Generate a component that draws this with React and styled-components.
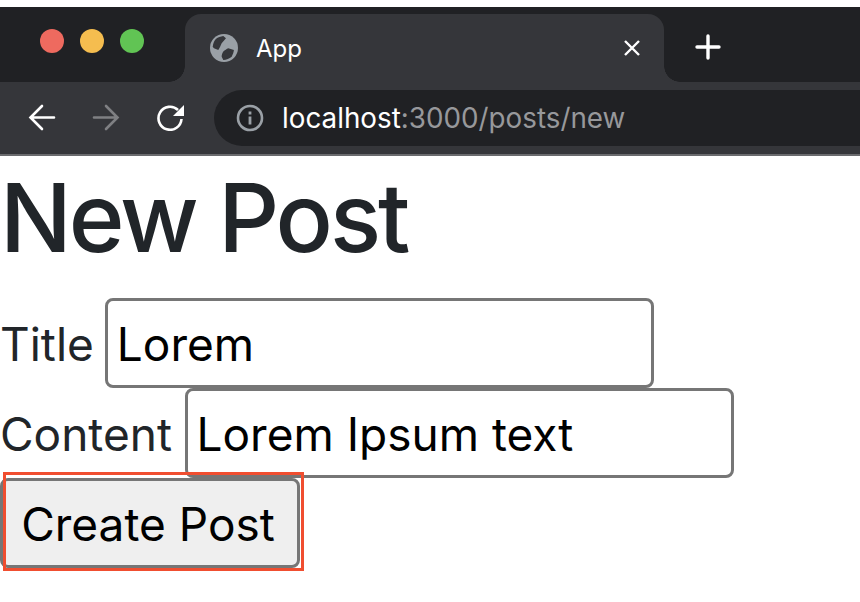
import React from "react";
import styled, { createGlobalStyle } from "styled-components";

const Global = createGlobalStyle`
  html, body { margin: 0; padding: 0; background: #fff; }
  body { font-family: Inter, "Liberation Sans", sans-serif; color: #212529; overflow: hidden; }
`;

const Page = styled.div`
  width: 860px;
  height: 602px;
  padding-top: 7px;
  box-sizing: border-box;
  overflow: hidden;
`;

const TabStrip = styled.div`
  height: 75px;
  background: #202124;
  display: flex;
  align-items: flex-end;
`;

const Lights = styled.div`
  width: 185px;
  height: 100%;
  box-sizing: border-box;
  padding: 22px 0 0 40px;
  display: flex;
  gap: 16px;
`;

const Light = styled.span`
  width: 24px;
  height: 24px;
  border-radius: 50%;
  background: ${props => props.color};
`;

const Tab = styled.div`
  position: relative;
  width: 479px;
  height: 68px;
  box-sizing: border-box;
  padding: 0 23px 0 25px;
  background: #35363a;
  border-radius: 16px 16px 0 0;
  display: flex;
  align-items: center;
  color: #fff;
  font-size: 24px;

  &::before, &::after {
    content: "";
    position: absolute;
    bottom: 0;
    width: 16px;
    height: 16px;
  }
  &::before {
    left: -16px;
    background: radial-gradient(circle at 0 0, transparent 15.5px, #35363a 16px);
  }
  &::after {
    right: -16px;
    background: radial-gradient(circle at 100% 0, transparent 15.5px, #35363a 16px);
  }
`;

const TabTitle = styled.span`
  flex: 1;
  margin-left: 18px;
`;

const NewTab = styled.svg`
  margin: 0 0 22px 31px;
`;

const Toolbar = styled.div`
  height: 74px;
  box-sizing: border-box;
  background: #35363a;
  border-bottom: 2px solid #6a6b6e;
  display: flex;
  align-items: flex-start;
  padding: 8px 0 0 28px;
`;

const NavIcon = styled.svg`
  margin-top: 13px;
  margin-right: ${props => props.$gap}px;
  flex: none;
`;

const Omnibox = styled.div`
  flex: 1;
  height: 56px;
  margin-left: 30px;
  padding-left: 22px;
  background: #202124;
  border-radius: 28px 0 0 28px;
  display: flex;
  align-items: center;
  font-size: 27.800px;
`;

const Host = styled.span`
  margin-left: 18px;
  color: #fff;
`;

const Path = styled.span`
  color: #97989b;
`;

const Content = styled.main`
  display: flex;
  flex-direction: column;
  align-items: flex-start;
`;

const Heading = styled.h1`
  margin: 10px 0 28px;
  font-size: 95px;
  font-weight: 500;
  line-height: 104px;
  letter-spacing: -3px;
`;

const Field = styled.div`
  height: 90px;
  display: flex;
  align-items: center;
  gap: ${props => props.$gap}px;
`;

const Label = styled.label`
  padding-top: 2px;
  font-size: 46px;
`;

const TextInput = styled.input`
  width: 549px;
  height: 90px;
  box-sizing: border-box;
  padding: 2px 9px 0;
  border: 3px solid #767676;
  border-radius: 8px;
  background: #fff;
  font-family: inherit;
  font-size: 46px;
  color: #000;
  outline: none;
`;

const ButtonWrap = styled.div`
  position: relative;

  &::after {
    content: "";
    position: absolute;
    left: 3px;
    top: -6px;
    width: 301px;
    height: 99px;
    box-sizing: border-box;
    border: 3px solid #f04e30;
    pointer-events: none;
  }
`;

const SubmitButton = styled.button`
  display: block;
  width: 300px;
  height: 90px;
  border: 3px solid #767676;
  border-radius: 8px;
  background: #efefef;
  font-family: inherit;
  font-size: 46px;
  color: #000;
  padding: 2px 4px 0 0;
`;

export default function App() {
  return (
    <Page>
      <Global />
      <TabStrip>
        <Lights>
          <Light color="#ee6a5f" />
          <Light color="#f5bd4f" />
          <Light color="#61c454" />
        </Lights>
        <Tab>
          <svg width="28" height="28" viewBox="0 0 24 24">
            <circle cx="12" cy="12" r="12" fill="#9aa0a6" />
            <path d="M2.300 10.900C2.800 8 3.500 6 5 4.300 7 2.800 9 2 11.400 1.700l2.300 2L10 8c-1 2-1.500 4-2.900 5.700l-3.700-1.400z" fill="#35363a" />
            <path d="M20.500 13.700c-.2 2-1 4-1.900 5.700-2 1.500-4.500 2.600-7.200 2.900L10 19.400c0-1.500.5-3 1.400-4.300 1.300-1 2.800-2.300 4.300-2.800z" fill="#35363a" />
          </svg>
          <TabTitle>App</TabTitle>
          <svg width="18" height="18" viewBox="0 0 18 18">
            <path d="M2 2l14 14M16 2L2 16" stroke="#fff" strokeWidth="2.400" />
          </svg>
        </Tab>
        <NewTab width="26" height="26" viewBox="0 0 26 26">
          <path d="M13 2v22M2 13h22" stroke="#fff" strokeWidth="3.400" strokeLinecap="round" />
        </NewTab>
      </TabStrip>
      <Toolbar>
        <NavIcon $gap={36} width="28" height="28" viewBox="0 0 28 28">
          <path d="M26 14.500H3M14 3L2.500 14.500 14 26" fill="none" stroke="#fff" strokeWidth="2.600" strokeLinecap="round" />
        </NavIcon>
        <NavIcon $gap={36} width="28" height="28" viewBox="0 0 28 28">
          <path d="M2 14.500h23M14 3l11.500 11.500L14 26" fill="none" stroke="#7f8083" strokeWidth="2.600" strokeLinecap="round" />
        </NavIcon>
        <NavIcon $gap={0} width="28" height="28" viewBox="0 0 28 28">
          <path d="M25.500 16a11.500 11.500 0 1 1-3.500-9" fill="none" stroke="#fff" strokeWidth="2.600" />
          <path d="M28 2v11H17z" fill="#fff" />
        </NavIcon>
        <Omnibox>
          <svg width="28" height="28" viewBox="0 0 28 28">
            <circle cx="14" cy="14" r="12" fill="none" stroke="#9aa0a6" strokeWidth="2.600" />
            <path d="M14 12.500v8M14 7.500v3" stroke="#9aa0a6" strokeWidth="2.800" />
          </svg>
          <Host>localhost<Path>:3000/posts/new</Path></Host>
        </Omnibox>
      </Toolbar>
      <Content>
        <Heading>New Post</Heading>
        <Field $gap={11}>
          <Label>Title</Label>
          <TextInput defaultValue="Lorem" />
        </Field>
        <Field $gap={12.500}>
          <Label>Content</Label>
          <TextInput defaultValue="Lorem Ipsum text" />
        </Field>
        <ButtonWrap>
          <SubmitButton>Create Post</SubmitButton>
        </ButtonWrap>
      </Content>
    </Page>
  );
}
